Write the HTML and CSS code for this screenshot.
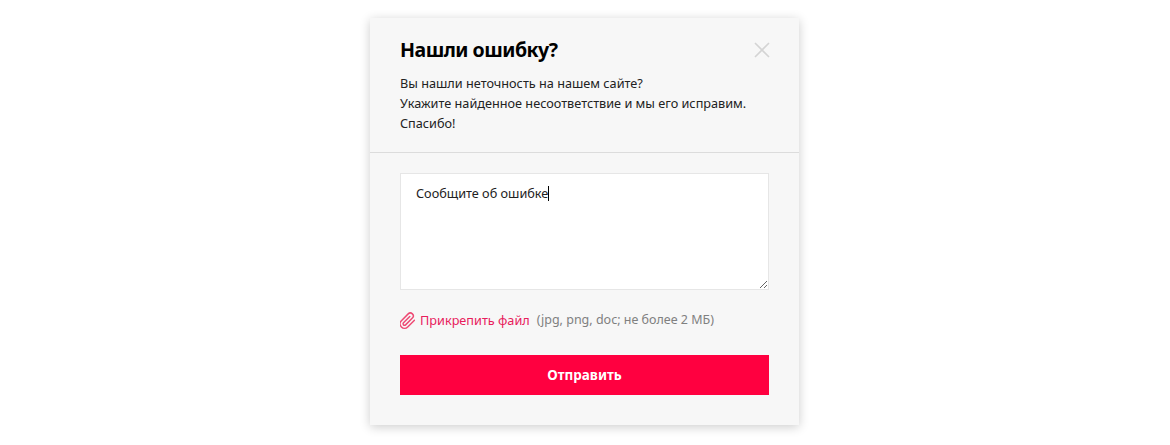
FILE: index.html
```html
<!DOCTYPE html>
<html lang="ru">
<head>
    <meta charset="UTF-8">
    <title>Нашли ошибку?</title>
    <link rel="stylesheet" href="styles.css">
</head>
<body>

    <div class="modal">
        <div class="modal-head">
            <div class="title-row">
                <h2 class="modal-title">Нашли ошибку?</h2>
                <button class="close-btn" type="button" aria-label="Закрыть">
                    <svg width="16" height="16" viewBox="0 0 16 16"><path d="M1 1l14 14M15 1L1 15" stroke="#d4d4d4" stroke-width="1.6" fill="none"/></svg>
                </button>
            </div>
            <p class="modal-text">Вы нашли неточность на нашем сайте?<br>Укажите найденное несоответствие и мы его исправим.<br>Спасибо!</p>
        </div>

        <form class="modal-body">
            <div class="message-box" role="textbox" contenteditable="true">Сообщите об ошибке<span class="caret"></span></div>

            <div class="attach-row">
                <a class="attach-link" href="#">
                    <svg width="15" height="17" viewBox="2 0 20 23"><path d="M21.44 11.05l-9.19 9.19a6 6 0 0 1-8.49-8.49l9.19-9.19a4 4 0 0 1 5.66 5.66l-9.2 9.19a2 2 0 0 1-2.83-2.83l8.49-8.48" stroke="#ee4a74" stroke-width="2" fill="none" stroke-linecap="round" stroke-linejoin="round"/></svg>
                    <span>Прикрепить файл</span>
                </a>
                <span class="attach-hint">(jpg, png, doc; не более 2 МБ)</span>
            </div>

            <button class="submit-btn" type="button">Отправить</button>
        </form>
    </div>

</body>
</html>
```

FILE: styles.css
```css
body {
    margin: 0;
    padding: 18px 1px 20px 0;
    background-color: #fff;
    font-family: "Noto Sans", "Open Sans", sans-serif;
}

.modal {
    width: 429px;
    height: 407px;
    margin: 0 auto;
    background-color: #f7f7f7;
    box-shadow: 0 2px 10px rgba(0, 0, 0, 0.2);
}

.modal-head {
    box-sizing: border-box;
    height: 135px;
    padding: 18px 30px 0;
    border-bottom: 1px solid #dcdcdc;
}

.title-row {
    display: flex;
    justify-content: space-between;
    align-items: center;
}

.modal-title {
    margin: 0;
    font-size: 19.5px;
    letter-spacing: -0.5px;
    line-height: 28px;
    font-weight: 700;
    color: #000;
}

.close-btn {
    display: flex;
    margin-right: -1px;
    padding: 0;
    background: none;
    border: none;
    cursor: pointer;
}

.modal-text {
    margin: 9px 0 0;
    font-size: 12.7px;
    line-height: 20px;
    color: #222;
}

.modal-body {
    padding: 20px 30px 0;
}

.message-box {
    box-sizing: border-box;
    height: 117px;
    padding: 9px 15px;
    background-color: #fff;
    border: 1px solid #e6e6e6;
    font-size: 12.7px;
    line-height: 20px;
    color: #222;
    overflow: auto;
    resize: vertical;
    outline: none;
}

.caret {
    display: inline-block;
    width: 1px;
    height: 15px;
    background-color: #000;
    vertical-align: -3px;
}

.attach-row {
    display: flex;
    align-items: center;
    margin-top: 20px;
    font-size: 12.7px;
    line-height: 20px;
}

.attach-link {
    display: flex;
    align-items: center;
    gap: 5px;
    color: #e8205c;
    text-decoration: none;
}

.attach-hint {
    margin-left: 7px;
    font-size: 12.5px;
    color: #808080;
}

.submit-btn {
    display: block;
    width: 100%;
    height: 40px;
    margin-top: 25px;
    background-color: #ff0040;
    border: none;
    color: #fff;
    font-family: inherit;
    font-size: 13.5px;
    font-weight: 700;
    cursor: pointer;
}
```
